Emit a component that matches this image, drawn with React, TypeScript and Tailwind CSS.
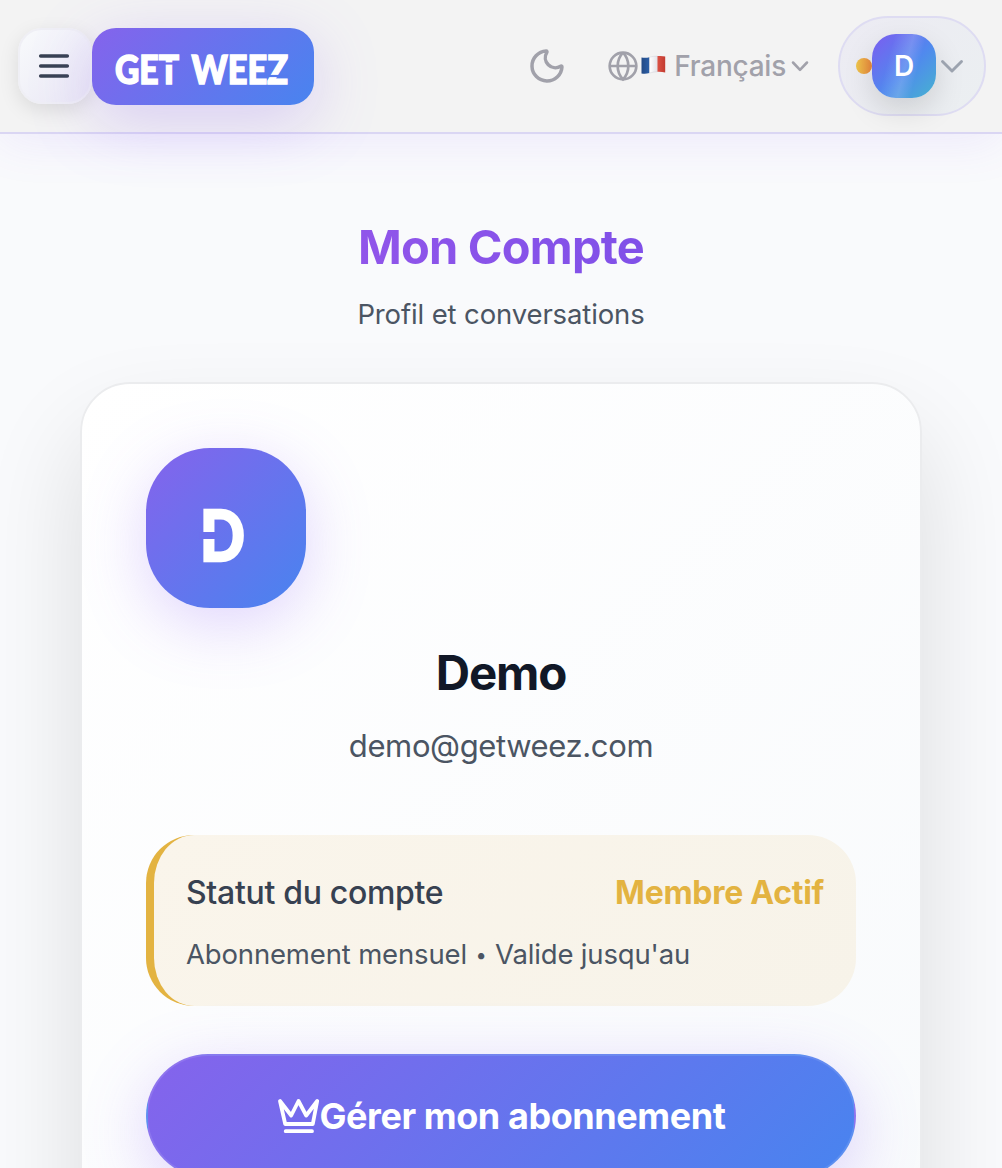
import { Moon } from "lucide-react";

function Flag() {
  return (
    <svg width="26" height="20" viewBox="0 0 26 20" className="mb-[2px] ml-[2px] shrink-0">
      <defs>
        <linearGradient id="flag-blue" x1="0" x2="1">
          <stop offset="0" stopColor="#234a85" />
          <stop offset="1" stopColor="#2b5fa8" />
        </linearGradient>
        <linearGradient id="flag-white" x1="0" x2="1">
          <stop offset="0" stopColor="#ffffff" />
          <stop offset="1" stopColor="#e2e2e8" />
        </linearGradient>
        <linearGradient id="flag-red" x1="0" x2="1">
          <stop offset="0" stopColor="#dc5246" />
          <stop offset="1" stopColor="#c23b30" />
        </linearGradient>
      </defs>
      <path d="M0.500 2.400C3 3 5.500 2.900 8.500 2.200V18C5.500 18.900 3 19 0.500 18.400Z" fill="url(#flag-blue)" />
      <path d="M8.500 2.200C11.500 1.400 13.500 1.200 16.500 1.100V16.700C14 16.800 11.500 17.200 8.500 18Z" fill="url(#flag-white)" stroke="#c8c8d0" strokeWidth="0.400" />
      <path d="M16.500 1.100C19.500 .8 22 .9 24.200 1.600V17.600C22 16.900 19.500 16.600 16.500 16.700Z" fill="url(#flag-red)" />
    </svg>
  );
}

function Logo() {
  return (
    <svg width="222" height="77" viewBox="0 0 222 77" role="img" aria-label="GET WEEZ">
      <g fill="white" stroke="white" strokeWidth="1.500" fontFamily="Lato, sans-serif" fontWeight="900" fontSize="39.500">
        <text x="23" y="56" textLength="64" lengthAdjust="spacingAndGlyphs">GET</text>
        <text x="99.500" y="56" textLength="96.500" lengthAdjust="spacingAndGlyphs">WEEZ</text>
      </g>
      <path d="M70 35.500h17" stroke="#6e6dec" strokeWidth="2.200" />
      <path d="M176.500 48h20" stroke="#557bed" strokeWidth="2.200" />
    </svg>
  );
}

function Header() {
  return (
    <header className="relative z-10 flex h-[134px] items-center border-b-2 border-[#dad6f3] bg-[#f3f3f3] pl-[18px] pr-4 shadow-[0_8px_48px_rgba(139,92,246,0.10)]">
      <button className="flex h-[76px] w-[74px] shrink-0 items-center justify-center rounded-[24px] border-2 border-[#efeff5] bg-linear-to-br from-[#f8fafc] to-[#eae8f4] shadow-[0_6px_20px_rgba(0,0,0,0.10)]">
        <svg width="40" height="40" viewBox="0 0 24 24" fill="none" stroke="#374151" strokeWidth="2.100" strokeLinecap="round" className="mr-[2px] shrink-0">
          <path d="M4 6h16M4 12h16M4 18h16" />
        </svg>
      </button>
      <div className="h-[77px] w-[222px] shrink-0 rounded-[24px] bg-linear-[135deg] from-[#8563ec] to-[#4884ef] shadow-[0_16px_64px_rgba(139,92,246,0.26)]">
        <Logo />
      </div>
      <div className="ml-auto flex items-center">
        <Moon size={40} strokeWidth={2.1} color="#a1a1aa" className="mr-[40px]" />
        <svg width="32" height="32" viewBox="0 0 24 24" fill="none" stroke="#a1a1aa" strokeWidth="2">
          <circle cx="12" cy="12" r="10" />
          <path d="M12 2a14.500 14.500 0 0 0 0 20 14.500 14.500 0 0 0 0-20M2 12h20" />
        </svg>
        <Flag />
        <span className="ml-[7px] whitespace-nowrap text-[28px] font-medium tracking-[-0.25px] text-[#a1a1aa]">Français</span>
        <svg width="28" height="28" viewBox="0 0 24 24" fill="none" stroke="#a1a1aa" strokeWidth="2.200" strokeLinecap="round" strokeLinejoin="round">
          <path d="m6 9 6 6.300 6-6.300" />
        </svg>
        <div className="ml-[24px] flex h-[100px] w-[148px] items-center rounded-[50px] border-2 border-[#dedcf2] bg-linear-[135deg] from-[#ecebf3] to-[#ebeff1] pl-4">
          <span className="size-4 rounded-full bg-linear-to-r from-[#edc54b] to-[#e8863d]" />
          <span className="flex size-16 items-center justify-center rounded-[24px] bg-[linear-gradient(105deg,transparent_28%,rgba(255,255,255,0.16)_52%,transparent_68%),linear-gradient(135deg,#7c5cf0_0%,#5089ee_55%,#46b3cf_100%)] text-[28px] font-semibold text-white shadow-[0_12px_30px_rgba(0,0,0,0.13)]">
            D
          </span>
          <svg width="32" height="36" viewBox="0 0 32 36" fill="none" stroke="#9ca3af" strokeWidth="2.900" strokeLinecap="round" strokeLinejoin="round">
            <path d="m6.500 13.500 9.500 9.500 9.500-9.500" />
          </svg>
        </div>
      </div>
    </header>
  );
}

export default function App() {
  return (
    <div className="h-[1168px] overflow-hidden bg-[#f9fafc] font-['Inter',sans-serif]">
      <Header />
      <main className="px-20 pt-[83px] text-center">
        <h1 className="text-[47px] font-bold leading-[60px] tracking-[-0.8px]">
          <span className="bg-linear-to-r from-[#9055ea] to-[#8050e8] bg-clip-text text-transparent">Mon Compte</span>
        </h1>
        <p className="mt-[16px] text-[27.500px] leading-[42px] tracking-[-0.130px] text-[#4b5563]">Profil et conversations</p>
        <section className="mt-[47px] h-[900px] rounded-[50px] border-2 border-[#ebecee] bg-linear-[135deg] from-white to-[#f8fafc] p-16 shadow-[0_50px_100px_rgba(0,0,0,0.12)]">
          <div className="flex size-40 items-center justify-center rounded-[64px] bg-linear-[135deg] from-[#8563ec] to-[#4884ef] shadow-[0_16px_64px_rgba(139,92,246,0.26)]">
            <span className="relative ml-[2px] mt-[10px] origin-left scale-x-[0.83] font-['Lato'] text-[71px] font-black leading-none text-white [-webkit-text-stroke:2.500px_white]">
              D
              <span className="absolute -left-px top-[34px] h-[7px] w-[20px] bg-[#6b70ed]" />
            </span>
          </div>
          <h2 className="mt-[35px] text-[47.500px] font-bold leading-[60px] tracking-[-1.200px] text-[#111827]">Demo</h2>
          <p className="mt-[20px] text-[31px] leading-[46px] tracking-[-0.380px] text-[#4b5563]">demo@getweez.com</p>
          <div className="mt-[66px] rounded-[48px] border-l-8 border-[#e3b341] bg-linear-[135deg] from-[#faf5eb] to-[#f7f3e9] px-8 pb-[31.500px] pt-8 text-left">
            <div className="flex justify-between text-[32px] leading-[52px]">
              <span className="font-medium tracking-[-0.320px] text-[#374151]">Statut du compte</span>
              <span className="font-bold tracking-[-0.28px] text-[#e3b341]">Membre Actif</span>
            </div>
            <p className="mt-[15px] text-[27.500px] leading-[40px] tracking-[-0.160px] text-[#4b5563]">
              Abonnement mensuel <span className="inline-block w-[13px] text-center align-[2px] text-[20px] leading-none">•</span> Valide jusqu'au
            </p>
          </div>
          <button className="mt-[48px] flex h-[124px] w-full items-center justify-center rounded-[62px] border-2 border-white/10 bg-linear-[135deg] from-[#8563ec] to-[#4884ef] text-[36px] font-bold tracking-[-0.430px] text-white shadow-[0_16px_64px_rgba(139,92,246,0.26)]">
            <svg width="43" height="42" viewBox="276.500 1095 43 42" fill="none" stroke="white" strokeWidth="3.800" strokeLinejoin="round" strokeLinecap="round" className="shrink-0">
              <path d="M279.500 1101 290.700 1115.500 298 1101 305.700 1115.500 316.700 1101 312.300 1124H284.700ZM285.200 1131.200H311.500" />
            </svg>
            <span>Gérer mon abonnement</span>
          </button>
        </section>
      </main>
    </div>
  );
}
